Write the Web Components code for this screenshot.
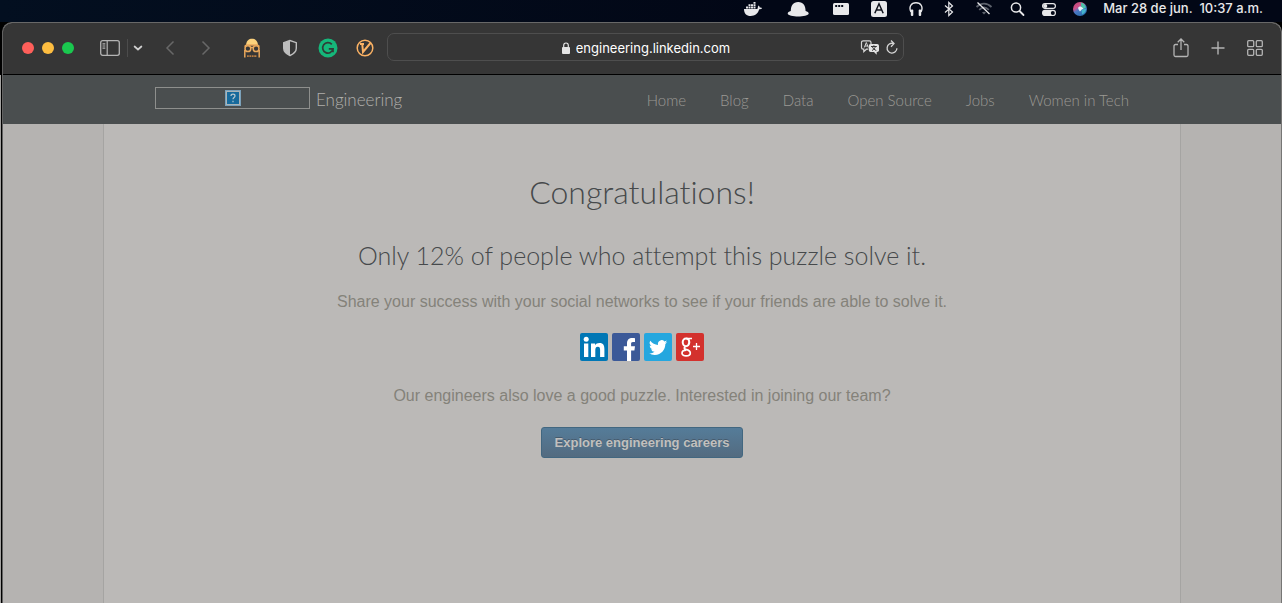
<!DOCTYPE html>
<html lang="es">
<head>
<meta charset="utf-8">
<title>LinkedIn Engineering</title>
<style>
html, body { margin: 0; min-height: 100%; }
body { background: #020816; font-family: Inter, "Liberation Sans", sans-serif; }
mac-desktop { min-height: 100vh; }
</style>
</head>
<body>
<mac-desktop></mac-desktop>

<template id="t-desktop">
  <style>
    :host { display: flex; flex-direction: column; background: linear-gradient(#a3a2a0, #a3a2a0) 0 75px / 1px 100% no-repeat #000; }
    safari-window { flex: 1; margin-left: 2px; }
  </style>
  <menu-bar></menu-bar>
  <safari-window><linkedin-page></linkedin-page></safari-window>
</template>

<template id="t-menubar">
  <style>
    :host { display: flex; align-items: flex-start; justify-content: flex-end; gap: 16px; height: 22px; box-sizing: border-box; padding-right: 19px; background: linear-gradient(90deg, #030f20, #020716 60%, #020716); color: #e8e8ea; }
    svg { display: block; flex: none; }
    time { font: 500 13px/17px Inter, "Liberation Sans", sans-serif; white-space: pre; }
  </style>
  <svg width="20" height="18" viewBox="0 0 20 18" fill="currentColor"><path d="M1 9h12.200c.8 0 1.500-.2 1.700-.8-.3-1 .1-2 .8-2.600.7.500 1 1.200 1 1.900 1-.2 1.900 0 2.400.4-.5 1-1.600 1.400-2.900 1.400C15 13.700 12 16 7.700 16 3.400 16 1 13.500 1 9z"/><path d="M3 6.500h2v2H3zM5.500 6.500h2v2h-2zM8 6.500h2v2H8zM10.500 6.500h2v2h-2zM5.500 4.200h2v1.900h-2zM8 4.200h2v1.900H8zM10.500 4.200h2v1.900h-2zM10.500 2h2v1.800h-2z"/></svg>
  <svg width="38" height="18" viewBox="-9 0 38 18" fill="currentColor"><path d="M2.800 11C2.900 5.500 5 2 10.200 2s7.200 3.500 7.400 9c1.900.5 3.100 1.300 3.100 2.600C20.700 15.600 15 16.600 10.200 16.600S-.3 15.600-.3 13.600C-.3 12.300.9 11.500 2.800 11z"/></svg>
  <svg width="16" height="18" viewBox="0 0 16 18"><rect y="3" width="16" height="12" rx="1.500" fill="currentColor"/><path d="M2.200 5h2v2h-2zM5.200 5h2v2h-2zM8.200 5h2v2h-2z" fill="#050a18"/></svg>
  <svg width="28" height="18" viewBox="-6 0 28 18"><rect y="1" width="16" height="16" rx="2.500" fill="currentColor"/><path d="M3.800 13.200 8 3.800l4.200 9.400M5.200 10h5.600" fill="none" stroke="#10131c" stroke-width="1.500"/></svg>
  <svg width="14" height="18" viewBox="0 0 14 18"><path d="M2 12C-.5 7 2 2.800 7 2.800s7.500 4.200 5 9.200" fill="none" stroke="currentColor" stroke-width="1.400"/><rect x="1.800" y="9.500" width="2.500" height="6.500" rx="1" fill="currentColor"/><rect x="9.700" y="9.500" width="2.500" height="6.500" rx="1" fill="currentColor"/></svg>
  <svg width="20" height="18" viewBox="0 0 20 18"><path d="m6 5.500 7.500 6.500-3.700 3.500V2.500L13.500 6 6 12.500" fill="none" stroke="currentColor" stroke-width="1.200"/></svg>
  <svg width="18" height="18" viewBox="0 0 18 18" fill="none"><g stroke="#5d626c" stroke-width="1.800"><path d="M1.500 7C6 2.500 12 2.500 16.500 7M4.200 9.800c3-2.800 6.600-2.800 9.600 0"/><path d="M7 12.500c1.200-1 2.800-1 4 0L9 14.500z" fill="#5d626c" stroke="none"/></g><path d="m2.500 2.500 12 11.500" stroke="currentColor" stroke-width="1.300"/></svg>
  <svg width="16" height="18" viewBox="0 0 16 18" fill="none" stroke="currentColor"><circle cx="7" cy="7.500" r="4.600" stroke-width="1.500"/><path d="m10.500 11 4 4" stroke-width="1.800" stroke-linecap="round"/></svg>
  <svg width="16" height="18" viewBox="0 0 16 18"><rect x="1.600" y="3.600" width="12.800" height="4.800" rx="2.400" fill="none" stroke="currentColor" stroke-width="1.200"/><circle cx="4.200" cy="6" r="2.100" fill="currentColor"/><rect x="1" y="9.800" width="14" height="6.200" rx="3.100" fill="currentColor"/><circle cx="11.800" cy="12.900" r="2" fill="#050a18"/></svg>
  <svg width="14" height="18" viewBox="0 0 14 18"><defs><linearGradient id="a" x1="0" y1="0" x2=".6" y2="1"><stop offset="0" stop-color="#b8486f"/><stop offset=".4" stop-color="#d0508a"/><stop offset=".6" stop-color="#4a78c4"/><stop offset="1" stop-color="#2c6fae"/></linearGradient></defs><circle cx="7" cy="9" r="7" fill="url(#a)"/><path d="M8 2.500c3 .8 4.600 3 4.700 5.500L8.500 9z" fill="#4bc5aa"/><path d="M8.500 9.500 13 9c0 2.500-1.500 4.500-4 5.500z" fill="#44b4cc"/><path d="m5 7.700 2-1.500 1.500.8 2 1.500-1.800 1L7 11.500l-1.300-1.700z" fill="#e9f1f7"/></svg>
  <time>Mar 28 de jun.  10:37 a.m.</time>
</template>

<template id="t-window">
  <style>
    :host { display: flex; flex-direction: column; box-sizing: border-box; border: 1px solid #686868; border-color: #686868 #767675 #767675 #626262; border-bottom: 0; border-radius: 10px 10px 0 0; overflow: hidden; background: #b5b3b1; }
    ::slotted(*) { flex: 1; }
  </style>
  <safari-toolbar></safari-toolbar>
  <slot></slot>
</template>

<template id="t-toolbar">
  <style>
    :host { display: grid; grid-template-columns: 384px minmax(0, 517px) 1fr; align-items: center; height: 52px; box-sizing: border-box; padding-bottom: 3px; border-bottom: 1px solid #000; background: #363636; color: #b4b4b4; }
    button { all: unset; display: block; flex: none; }
    svg { display: block; }
    .left, .right, .dots, .nav, .ext { display: flex; align-items: center; }
    .left, .right { padding-top: 2px; }
    .dots { gap: 8px; padding-left: 19px; }
    .dots button { width: 12px; height: 12px; border-radius: 50%; }
    .side { display: flex; align-items: center; margin-left: 26px; }
    .side i { width: 1px; height: 18px; background: #4c4c4c; margin: 0 5px 0 7px; }
    .nav { gap: 24px; margin-left: 21px; color: #686868; }
    .ext { gap: 18px; margin-left: 30px; }
    .right { justify-content: flex-end; gap: 17px; padding-right: 16px; }
    .address { position: relative; display: flex; align-items: center; justify-content: center; gap: 5px; height: 28px; box-sizing: border-box; padding-top: 2px; border: 1px solid #4e4e4e; border-radius: 7px; color: #e4e4e4; }
    .address input { all: unset; field-sizing: content; font: 400 13px/18px Inter, "Liberation Sans", sans-serif; color: #fff; }
    .tools { position: absolute; right: 4px; top: 5px; display: flex; gap: 5px; }
  </style>
  <div class="left">
    <div class="dots"><button aria-label="Cerrar" style="background:#fe5f5a"></button><button aria-label="Minimizar" style="background:#fdbd40"></button><button aria-label="Ampliar" style="background:#1ac84f"></button></div>
    <div class="side">
      <button aria-label="Barra lateral"><svg width="20" height="16" viewBox="0 0 20 16" fill="none" stroke="currentColor"><rect x=".7" y=".7" width="18.600" height="14.600" rx="2" stroke-width="1.300"/><path d="M7.200 1v14M2.500 3.800h2.800M2.500 6h2.800M2.500 8.200h2.800" stroke-width="1.200"/></svg></button>
      <i></i>
      <button aria-label="Grupos de pestañas"><svg width="10" height="8" viewBox="0 0 10 8"><path d="m1.600 2.500 3.400 3 3.400-3" fill="none" stroke="#d0d0d0" stroke-width="1.700" stroke-linecap="round"/></svg></button>
    </div>
    <div class="nav">
      <button aria-label="Atrás"><svg width="12" height="16" viewBox="0 0 12 16"><path d="M9.500 1.500 3 8l6.500 6.500" fill="none" stroke="currentColor" stroke-width="1.500"/></svg></button>
      <button aria-label="Adelante"><svg width="12" height="16" viewBox="0 0 12 16"><path d="M2.500 1.500 9 8l-6.500 6.500" fill="none" stroke="currentColor" stroke-width="1.500"/></svg></button>
    </div>
    <div class="ext">
      <button aria-label="Gafas"><svg width="20" height="20" viewBox="0 0 20 20"><path d="M4 7C4.500 2.500 7 .8 10 .8s5.500 1.700 6 6.200z" fill="#fbd17c"/><g fill="none" stroke="#e9a85c" stroke-width="1.500"><path d="M8.800 9.500h2.400M2.800 12v7.500M17.200 12v7.500M2.500 8.500 4.500 7h11l2 1.500"/><circle cx="5.900" cy="10.700" r="2.900"/><circle cx="14.100" cy="10.700" r="2.900"/></g><path d="M5 18.200h10" stroke="#b77b41" stroke-width="1.800" stroke-dasharray="1.800 .6"/></svg></button>
      <button aria-label="Escudo"><svg width="20" height="20" viewBox="0 0 20 20"><path d="M10 2.500 3.700 4.700v5.600c0 3.200 2.500 5.500 6.300 7.200 3.800-1.700 6.300-4 6.300-7.200V4.700z" fill="none" stroke="#bdbdbd" stroke-width="1.400"/><path d="M10 2.500 3.700 4.700v5.600c0 3.200 2.500 5.500 6.300 7.200z" fill="#bdbdbd"/></svg></button>
      <button aria-label="Gramática"><svg width="20" height="20" viewBox="0 0 20 20"><circle cx="10" cy="10" r="9.500" fill="#15b77a"/><path d="M13.800 6.400a5.200 5.200 0 1 0 1.200 4.400h-4.200M15 10.500v3.800" fill="none" stroke="#303c37" stroke-width="1.700"/></svg></button>
      <button aria-label="Vimari"><svg width="18" height="20" viewBox="0 0 18 20" fill="none" stroke="#fbb264"><circle cx="9" cy="10" r="7.800" stroke-width="1.500"/><path d="M4 6h4M6.300 6.500 7 14 14.500 5" stroke-width="2"/></svg></button>
    </div>
  </div>
  <div class="address">
    <svg width="10" height="12" viewBox="0 0 10 12"><rect x="1" y="5" width="8" height="7" rx="1" fill="currentColor"/><path d="M2.700 5.500V3.300a2.300 2.300 0 0 1 4.600 0v2.200" fill="none" stroke="currentColor" stroke-width="1.200"/></svg>
    <input type="text" aria-label="Dirección" value="engineering.linkedin.com">
    <div class="tools">
      <button aria-label="Traducir"><svg width="20" height="18" viewBox="0 0 20 18"><path d="M11 5V3.500A1.700 1.700 0 0 0 9.300 1.800H3.200A1.700 1.700 0 0 0 1.500 3.500v5c0 1 .7 1.700 1.700 1.700h.6v2.500l2.600-2.500h1.800" fill="none" stroke="#d5d5d5" stroke-width="1.200"/><path d="m4.300 8.500 2-5 2 5M5 7h2.700" fill="none" stroke="#d5d5d5"/><path d="M10.600 5h6.600A1.800 1.800 0 0 1 19 6.800v4.500c0 1-.8 1.700-1.800 1.700h-.5v2.800L14 13h-3.400a1.800 1.800 0 0 1-1.800-1.700V6.800c0-1 .8-1.800 1.800-1.800z" fill="#e4e4e4"/><path d="M11 7.500h5.800M13.900 6.300v1.200M12 11.500c2-1 3-2.200 3.300-4M12.500 8c.6 1.700 2 2.800 3.800 3.500" fill="none" stroke="#363636"/></svg></button>
      <button aria-label="Recargar"><svg width="14" height="18" viewBox="0 0 14 18"><path d="M8.200 4.400A4.900 4.900 0 1 0 11.900 9.200" fill="none" stroke="#d5d5d5" stroke-width="1.300"/><path d="m6 1.500 3 3.100-3 3.100" fill="none" stroke="#d5d5d5" stroke-width="1.300"/></svg></button>
    </div>
  </div>
  <div class="right">
    <button aria-label="Compartir"><svg width="20" height="20" viewBox="0 0 20 20" fill="none" stroke="currentColor" stroke-width="1.300"><path d="M7 6.500H4.500c-1 0-1.500.5-1.500 1.500v9c0 1 .5 1.500 1.500 1.500h11c1 0 1.500-.5 1.500-1.500V8c0-1-.5-1.500-1.500-1.500H13M10 12V1.200M6.700 4.300 10 1l3.300 3.300"/></svg></button>
    <button aria-label="Nueva pestaña"><svg width="20" height="20" viewBox="0 0 20 20"><path d="M10 3.500v13M3.500 10h13" stroke="currentColor" stroke-width="1.400"/></svg></button>
    <button aria-label="Pestañas"><svg width="20" height="20" viewBox="0 0 20 20" fill="none" stroke="currentColor" stroke-width="1.300"><rect x="2.700" y="2.700" width="6" height="6" rx="1"/><rect x="11.300" y="2.700" width="6" height="6" rx="1"/><rect x="2.700" y="11.300" width="6" height="6" rx="1"/><rect x="11.300" y="11.300" width="6" height="6" rx="1"/></svg></button>
  </div>
</template>

<template id="t-page">
  <style>
    :host { display: flex; flex-direction: column; background: #b5b3b1; }
    puzzle-result { flex: 1; }
  </style>
  <site-header></site-header>
  <puzzle-result></puzzle-result>
</template>

<template id="t-header">
  <style>
    :host { display: block; background: #4a4e4f; font-family: Lato, "Liberation Sans", sans-serif; font-weight: 300; font-variant-ligatures: none; }
    .inner { display: flex; align-items: center; justify-content: space-between; height: 49px; max-width: 974px; margin: 0 auto; }
    a { color: #9b9994; text-decoration: none; }
    .brand { display: flex; align-items: center; gap: 6px; font-size: 17px; line-height: 24px; color: #b0afab; }
    .logo { display: flex; align-items: center; justify-content: center; width: 155px; height: 22px; box-sizing: border-box; border: 1px solid #8e8f8d; margin-bottom: 4px; }
    nav { display: flex; gap: 34px; font-size: 15px; line-height: 20px; }
  </style>
  <div class="inner">
    <a class="brand" href="#"><span class="logo"><svg width="16" height="16" viewBox="0 0 16 16"><rect x=".5" y=".5" width="15" height="15" fill="#176a9c" stroke="#7ba1ba"/><rect x="1.500" y="1.500" width="13" height="13" fill="none" stroke="#aab4b7"/><path d="M6 6c0-2.400 4-2.400 4 0 0 1.500-2 1.500-2 3.200M8 10.800v1.400" fill="none" stroke="#b9c9cf" stroke-width="1.200"/></svg></span><span>Engineering</span></a>
    <nav><a href="#">Home</a><a href="#">Blog</a><a href="#">Data</a><a href="#">Open Source</a><a href="#">Jobs</a><a href="#">Women in Tech</a></nav>
  </div>
</template>

<template id="t-result">
  <style>
    :host { display: block; box-sizing: border-box; width: 100%; max-width: 1078px; margin: 0 auto; padding-top: 48px; border: solid #a5a4a2; border-width: 0 1px; background: #bbb9b7; text-align: center; color: #84827a; font: 16px/24px "Liberation Sans", Arial, sans-serif; }
    h1, h2, p { margin: 0; }
    h1, h2 { font-family: Lato, "Liberation Sans", sans-serif; font-weight: 300; font-variant-ligatures: none; color: #46494b; }
    h1 { font-size: 32px; line-height: 40px; }
    h2 { font-size: 25px; line-height: 32px; margin-top: 27px; }
    p { margin-top: 19px; }
    .social { display: flex; justify-content: center; gap: 4px; margin: 19px 0 23px; }
    .social a, .social svg { display: block; }
    .cta { display: inline-block; box-sizing: border-box; height: 31px; margin-top: 19px; padding: 0 13px; border: 1px solid #426780; border-radius: 3px; background: linear-gradient(#557c99, #536b80); color: #c1c0be; font: bold 13px/29px "Liberation Sans", Arial, sans-serif; text-decoration: none; text-shadow: 0 -1px 0 #465b6d; }
  </style>
  <h1>Congratulations!</h1>
  <h2>Only 12% of people who attempt this puzzle solve it.</h2>
  <p>Share your success with your social networks to see if your friends are able to solve it.</p>
  <div class="social">
    <a href="#" aria-label="LinkedIn"><svg width="28" height="28" viewBox="0 0 28 28"><rect width="28" height="28" rx="2" fill="#0077b5"/><g fill="#fff"><circle cx="6.200" cy="6.200" r="2.500"/><path d="M4 10.400h4.300V24H4zM11 10.400h4.100v1.900c.8-1.400 2.300-2.300 4.300-2.300 4.200 0 5 2.700 5 6.300V24h-4.300v-6.800c0-1.700-.2-3.500-2.300-3.500s-2.500 1.700-2.500 3.500V24H11z"/></g></svg></a>
    <a href="#" aria-label="Facebook"><svg width="28" height="28" viewBox="0 0 28 28"><rect width="28" height="28" rx="2" fill="#3b5998"/><path d="M15 28V17.500h-3.200v-4.200H15v-2.800C15 6.800 17 5 20.300 5c1.300 0 2.200.1 2.700.2v3.900h-2c-1.600 0-1.900.7-1.900 1.800v2.400H23l-.6 4.200h-3.300V28z" fill="#fff"/></svg></a>
    <a href="#" aria-label="Twitter"><svg width="28" height="28" viewBox="0 0 28 28"><rect width="28" height="28" rx="2" fill="#24a7df"/><g transform="translate(5 5.500) scale(.76)"><path d="M24 4.600a10 10 0 0 1-2.800.8 5 5 0 0 0 2.200-2.700c-1 .5-2 1-3.100 1.200a4.900 4.900 0 0 0-8.400 4.500A14 14 0 0 1 1.700 3.100a4.900 4.900 0 0 0 1.500 6.600 5 5 0 0 1-2.200-.6v.1a4.900 4.900 0 0 0 3.900 4.800 5 5 0 0 1-2.200.1 4.900 4.900 0 0 0 4.600 3.400A9.900 9.900 0 0 1 0 19.500a14 14 0 0 0 7.500 2.200c9.100 0 14-7.500 14-14v-.6A10 10 0 0 0 24 4.600z" fill="#fff"/></g></svg></a>
    <a href="#" aria-label="Google+"><svg width="28" height="28" viewBox="0 0 28 28"><rect width="28" height="28" rx="2" fill="#d3312d"/><g fill="none" stroke="#fff"><ellipse cx="10" cy="9.300" rx="3.300" ry="3.900" stroke-width="2"/><path d="M9.500 13.500c-2 1.300-1.400 2.200.5 2.900 2.500.8 4.300 1.700 4.300 3.500 0 4-8.300 4-8.300.3 0-2 2-3 4.300-3M10 5.500h6M12.300 6.300c1.300 1.500 1.300 4-.3 5.600" stroke-width="1.700"/><path d="M20.500 10v7M17 13.500h7" stroke-width="1.300"/></g></svg></a>
  </div>
  <p>Our engineers also love a good puzzle. Interested in joining our team?</p>
  <a class="cta" href="#">Explore engineering careers</a>
</template>

<script>
const define = (name, templateId) => customElements.define(name, class extends HTMLElement {
  constructor() {
    super();
    this.attachShadow({ mode: 'open' }).append(document.getElementById(templateId).content.cloneNode(true));
  }
});
define('menu-bar', 't-menubar');
define('safari-toolbar', 't-toolbar');
define('safari-window', 't-window');
define('site-header', 't-header');
define('puzzle-result', 't-result');
define('linkedin-page', 't-page');
define('mac-desktop', 't-desktop');
</script>
</body>
</html>
